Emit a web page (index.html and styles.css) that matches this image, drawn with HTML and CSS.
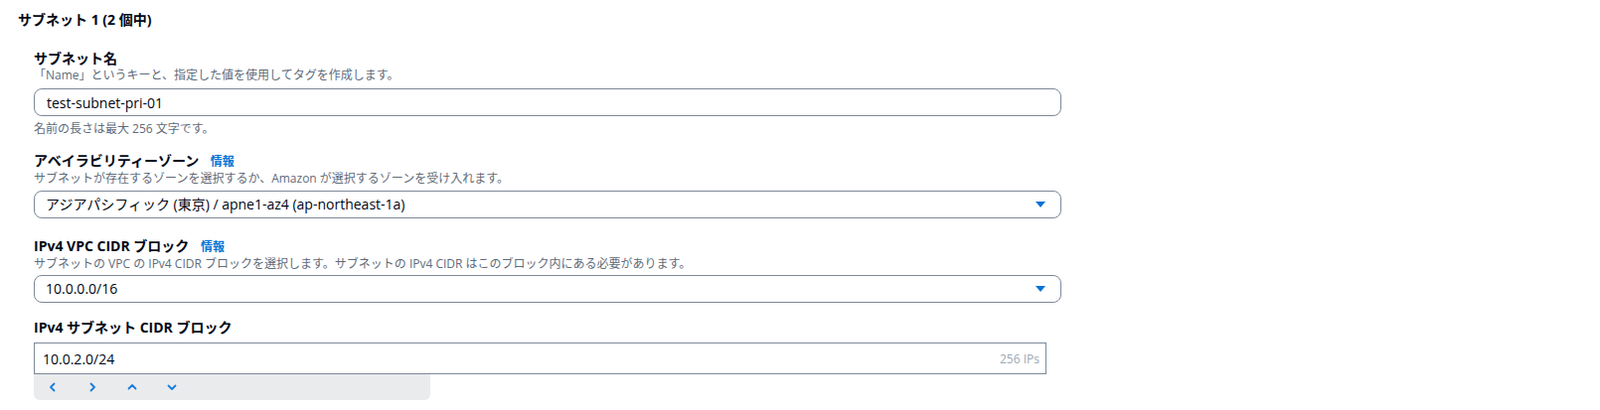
FILE: index.html
```html
<!DOCTYPE html>
<html lang="ja">
<head>
    <meta charset="UTF-8">
    <meta name="viewport" content="width=device-width, initial-scale=1.0">
    <title>サブネット設定</title>
    <link rel="stylesheet" href="styles.css">
</head>
<body>
    <div class="subnet-section">
        <h2 class="section-title">サブネット 1 (2 個中)</h2>

        <div class="fields">
            <!-- Subnet name -->
            <div class="field field-name">
                <div class="field-label">サブネット名</div>
                <div class="field-desc">「Name」というキーと、指定した値を使用してタグを作成します。</div>
                <input class="text-input rounded" type="text" value="test-subnet-pri-01">
                <div class="field-hint">名前の長さは最大 256 文字です。</div>
            </div>

            <!-- Availability zone -->
            <div class="field">
                <div class="field-label">アベイラビリティーゾーン <a class="info-link" href="#">情報</a></div>
                <div class="field-desc">サブネットが存在するゾーンを選択するか、Amazon が選択するゾーンを受け入れます。</div>
                <div class="select-box">
                    <span class="select-value">アジアパシフィック (東京) / apne1-az4 (ap-northeast-1a)</span>
                    <svg class="caret" width="12" height="8" viewBox="0 0 12 8"><path d="M1 1h10L6 7z" fill="#0972d3"/></svg>
                </div>
            </div>

            <!-- VPC CIDR -->
            <div class="field field-vpc">
                <div class="field-label">IPv4 VPC CIDR ブロック <a class="info-link" href="#">情報</a></div>
                <div class="field-desc">サブネットの VPC の IPv4 CIDR ブロックを選択します。サブネットの IPv4 CIDR はこのブロック内にある必要があります。</div>
                <div class="select-box">
                    <span class="select-value">10.0.0.0/16</span>
                    <svg class="caret" width="12" height="8" viewBox="0 0 12 8"><path d="M1 1h10L6 7z" fill="#0972d3"/></svg>
                </div>
            </div>

            <!-- Subnet CIDR -->
            <div class="field">
                <div class="field-label">IPv4 サブネット CIDR ブロック</div>
                <div class="cidr-input">
                    <span class="cidr-value">10.0.2.0/24</span>
                    <span class="cidr-count">256 IPs</span>
                </div>
                <div class="cidr-controls">
                    <button class="nav-btn" aria-label="前へ">
                        <svg width="12" height="12" viewBox="0 0 12 12"><path d="M7.5 2.5L4 6l3.5 3.5" fill="none" stroke="#1a7ddc" stroke-width="1.8" stroke-linecap="round" stroke-linejoin="round"/></svg>
                    </button>
                    <button class="nav-btn" aria-label="次へ">
                        <svg width="12" height="12" viewBox="0 0 12 12"><path d="M4.5 2.5L8 6 4.5 9.5" fill="none" stroke="#1a7ddc" stroke-width="1.8" stroke-linecap="round" stroke-linejoin="round"/></svg>
                    </button>
                    <button class="nav-btn" aria-label="上へ">
                        <svg width="12" height="12" viewBox="0 0 12 12"><path d="M2.5 7.5L6 4l3.5 3.5" fill="none" stroke="#1a7ddc" stroke-width="1.8" stroke-linecap="round" stroke-linejoin="round"/></svg>
                    </button>
                    <button class="nav-btn" aria-label="下へ">
                        <svg width="12" height="12" viewBox="0 0 12 12"><path d="M2.5 4.5L6 8l3.5-3.5" fill="none" stroke="#1a7ddc" stroke-width="1.8" stroke-linecap="round" stroke-linejoin="round"/></svg>
                    </button>
                </div>
            </div>
        </div>
    </div>
</body>
</html>
```

FILE: styles.css
```css
/* Basic styling */
body {
    margin: 0;
    background: #ffffff;
    color: #000716;
    font-family: 'Open Sans', 'Noto Sans CJK JP', sans-serif;
    font-size: 14px;
}

.subnet-section {
    padding: 10px 18px 0;
}

.section-title {
    margin: 0;
    font-size: 14px;
    font-weight: 700;
    line-height: 20px;
}

.fields {
    padding: 20px 0 0 16px;
}

.field {
    margin-bottom: 19px;
}

.field-name {
    margin-bottom: 15px;
}

.field-vpc {
    margin-bottom: 16px;
}

.field-label {
    font-size: 14px;
    font-weight: 700;
    line-height: 18px;
}

.info-link {
    margin-left: 8px;
    font-size: 12px;
    font-weight: 700;
    color: #0972d3;
    text-decoration: none;
}

.field-desc,
.field-hint {
    font-size: 12px;
    line-height: 16px;
    color: #5f6b7a;
}

.field-desc {
    margin-bottom: 4px;
}

.field-name .field-desc {
    margin-bottom: 5px;
}

.field-vpc .field-desc {
    margin-bottom: 3px;
}

.field-hint {
    margin-top: 5px;
}

/* Inputs */
.text-input {
    display: block;
    box-sizing: border-box;
    width: 1034px;
    height: 28px;
    margin: 0;
    padding: 0 12px;
    border: 1px solid #7d8998;
    font-family: inherit;
    font-size: 14px;
    color: #000716;
    outline: none;
}

.rounded {
    border-radius: 8px;
}

.select-box {
    display: flex;
    align-items: center;
    justify-content: space-between;
    box-sizing: border-box;
    width: 1034px;
    height: 28px;
    padding: 0 14px 0 11px;
    border: 1px solid #7d8998;
    border-radius: 8px;
}

.select-value {
    line-height: 20px;
}

.caret {
    display: block;
}

.cidr-input {
    display: flex;
    align-items: center;
    justify-content: space-between;
    box-sizing: border-box;
    width: 1019px;
    height: 32px;
    margin-top: 6px;
    padding: 0 6px 0 8px;
    border: 1px solid #7d8998;
}

.cidr-count {
    font-size: 12px;
    color: #9ba7b6;
}

.cidr-controls {
    display: flex;
    align-items: center;
    width: 399px;
    height: 26px;
    padding-left: 12px;
    box-sizing: border-box;
    background: #e9ebed;
    border-radius: 0 0 6px 6px;
}

.nav-btn {
    display: flex;
    align-items: center;
    justify-content: center;
    width: 14px;
    height: 20px;
    margin-right: 26px;
    padding: 0;
    border: none;
    background: none;
    cursor: pointer;
}
```
